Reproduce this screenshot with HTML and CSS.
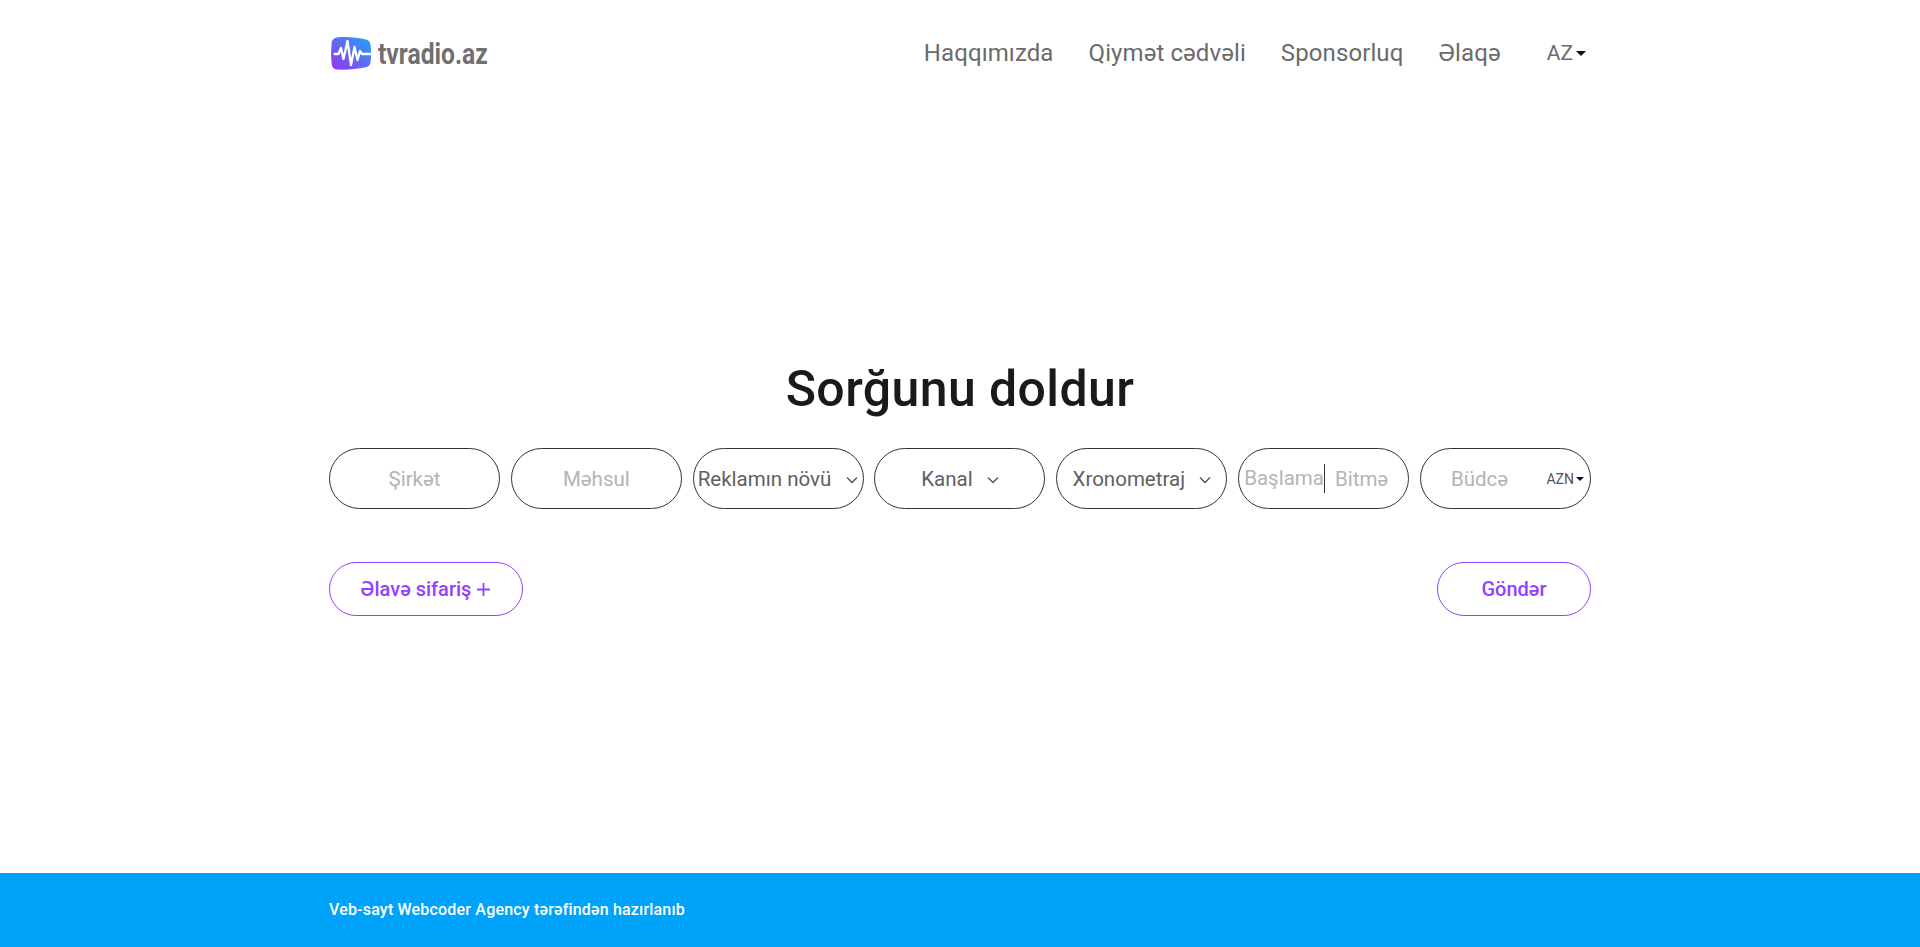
FILE: index.html
```html
<!DOCTYPE html>
<html lang="az">
<head>
<meta charset="utf-8">
<title>tvradio.az</title>
<link rel="stylesheet" href="styles.css">
</head>
<body>
<header class="header">
  <a class="logo" href="#">
    <svg class="logo-icon" width="42" height="36" viewBox="0 0 42 36">
      <defs>
        <linearGradient id="lg" x1="0" y1="1" x2="1" y2="0">
          <stop offset="0" stop-color="#9a30ee"/>
          <stop offset="0.5" stop-color="#5f6cf4"/>
          <stop offset="1" stop-color="#1aa8f8"/>
        </linearGradient>
      </defs>
      <path d="M6 1.5 C15 0.5 27 1.5 35 3.5 C38 4.3 39.3 6 39.7 10 C40.3 15 40.3 20 39.7 25 C39.3 29 38 30.6 35 31.2 C26 33 15 34 6 33.5 C2.5 33.2 1 31 0.6 27 C0 21 0 14 0.6 8 C1 4 2.5 2 6 1.5 Z" fill="url(#lg)"/>
      <path d="M3.5 18 H7.5 L10 12 L12.5 23 L16.5 5 L20 29 L23.5 11 L26.5 24 L29 15 L31 18 H41.5" fill="none" stroke="#fff" stroke-width="2.3" stroke-linejoin="round" stroke-linecap="round"/>
    </svg>
    <span class="logo-text">tvradio.az</span>
  </a>
  <nav class="nav">
    <a href="#">Haqqımızda</a>
    <a href="#">Qiymət cədvəli</a>
    <a href="#">Sponsorluq</a>
    <a href="#">Əlaqə</a>
  </nav>
  <div class="lang">AZ<span class="caret"></span></div>
</header>

<main class="main">
  <h1 class="title">Sorğunu doldur</h1>
  <form class="fields">
    <div class="pill"><span class="ph">Şirkət</span></div>
    <div class="pill"><span class="ph">Məhsul</span></div>
    <div class="pill pill-tight"><span class="val">Reklamın növü</span><svg class="chev" width="12" height="8" viewBox="0 0 12 8"><path d="M1 1.5 L6 6.5 L11 1.5" fill="none" stroke="#555" stroke-width="1.4"/></svg></div>
    <div class="pill"><span class="val">Kanal</span><svg class="chev" width="12" height="8" viewBox="0 0 12 8"><path d="M1 1.5 L6 6.5 L11 1.5" fill="none" stroke="#555" stroke-width="1.4"/></svg></div>
    <div class="pill"><span class="val">Xronometraj</span><svg class="chev" width="12" height="8" viewBox="0 0 12 8"><path d="M1 1.5 L6 6.5 L11 1.5" fill="none" stroke="#555" stroke-width="1.4"/></svg></div>
    <div class="pill pill-date"><span class="ph date-a">Başlama</span><span class="ph date-b">Bitmə</span></div>
    <div class="pill pill-budget"><span class="ph">Büdcə</span><span class="cur">AZN<span class="caret caret-s"></span></span></div>
  </form>
  <div class="actions">
    <button class="btn btn-add" type="button">Əlavə sifariş<svg class="plus" width="15" height="15" viewBox="0 0 15 15"><path d="M7.5 1 V14 M1 7.5 H14" stroke="#9440ff" stroke-width="1.8"/></svg></button>
    <button class="btn btn-send" type="button">Göndər</button>
  </div>
</main>

<footer class="footer">
  <div class="footer-in">Veb-sayt Webcoder Agency tərəfindən hazırlanıb</div>
</footer>
</body>
</html>
```

FILE: styles.css
```css
* { box-sizing: border-box; }
html, body { margin: 0; height: 100%; }
body {
  min-height: 947px;
  display: flex;
  flex-direction: column;
  background: #fff;
  font-family: Roboto, "Open Sans", sans-serif;
  color: #666;
}
a { text-decoration: none; color: inherit; }

.header {
  width: 1262px;
  margin: 0 auto;
  padding: 33px 5px 0 2px;
  height: 106px;
  display: flex;
  align-items: flex-start;
}
.logo { display: flex; align-items: center; height: 42px; }
.logo-icon { display: block; flex: none; }
.logo-text {
  display: inline-block;
  width: 111px;
  margin-left: 5px;
  font-weight: 700;
  font-size: 29px;
  color: #707070;
  transform: scaleX(0.85);
  transform-origin: left center;
  white-space: nowrap;
}
.nav {
  margin-left: auto;
  display: flex;
  gap: 35px;
  height: 40px;
  align-items: center;
  font-size: 24px;
  letter-spacing: 0.1px;
  color: #6b6b6b;
}
.lang {
  margin-left: 46px;
  height: 40px;
  display: flex;
  align-items: center;
  font-size: 21px;
  color: #6b6b6b;
}
.caret {
  margin-left: 3px;
  width: 0;
  height: 0;
  border-left: 5px solid transparent;
  border-right: 5px solid transparent;
  border-top: 5px solid #111;
}
.caret-s { margin-left: 2px; border-left-width: 4.5px; border-right-width: 4.5px; border-top-width: 4px; }

.main {
  flex: 1;
  width: 1262px;
  margin: 0 auto;
}
.title {
  margin: 250px 0 0;
  height: 66px;
  line-height: 66px;
  text-align: center;
  font-size: 50px;
  font-weight: 500;
  letter-spacing: 0.4px;
  color: #1a1a1a;
}
.fields {
  margin-top: 26px;
  display: grid;
  grid-template-columns: repeat(7, 171px);
  justify-content: space-between;
}
.pill {
  height: 61px;
  border: 1px solid #333;
  border-radius: 31px;
  display: flex;
  align-items: center;
  justify-content: center;
  font-size: 20.5px;
  white-space: nowrap;
}
.ph { color: #b4b4b4; }
.val { color: #606060; }
.chev { margin-left: 14px; margin-top: 2px; flex: none; }
.pill-tight { justify-content: space-between; padding: 0 5px 0 4px; }
.pill-date { justify-content: flex-start; padding-left: 5px; }
.date-a { padding-right: 0; border-right: 1px solid #333; line-height: 29px; }
.date-b { margin-left: 10px; }
.pill-budget { justify-content: flex-start; padding: 0 6px 0 30px; }
.cur {
  margin-left: auto;
  display: flex;
  align-items: center;
  font-size: 14px;
  color: #555;
}
.actions {
  margin-top: 53px;
  display: flex;
  justify-content: space-between;
}
.btn {
  height: 54px;
  border: 1px solid #9440ff;
  border-radius: 27px;
  background: #fff;
  color: #9440ff;
  font-family: inherit;
  font-size: 20px;
  font-weight: 500;
  display: flex;
  align-items: center;
  justify-content: center;
  padding: 0;
}
.btn-add { width: 194px; }
.btn-send { width: 154px; }
.plus { margin-left: 5px; }

.footer {
  height: 74px;
  background: #00a3fa;
  color: #fff;
  font-size: 16px;
  font-weight: 500;
  letter-spacing: 0.19px;
}
.footer-in {
  width: 1262px;
  margin: 0 auto;
  line-height: 74px;
}
```
